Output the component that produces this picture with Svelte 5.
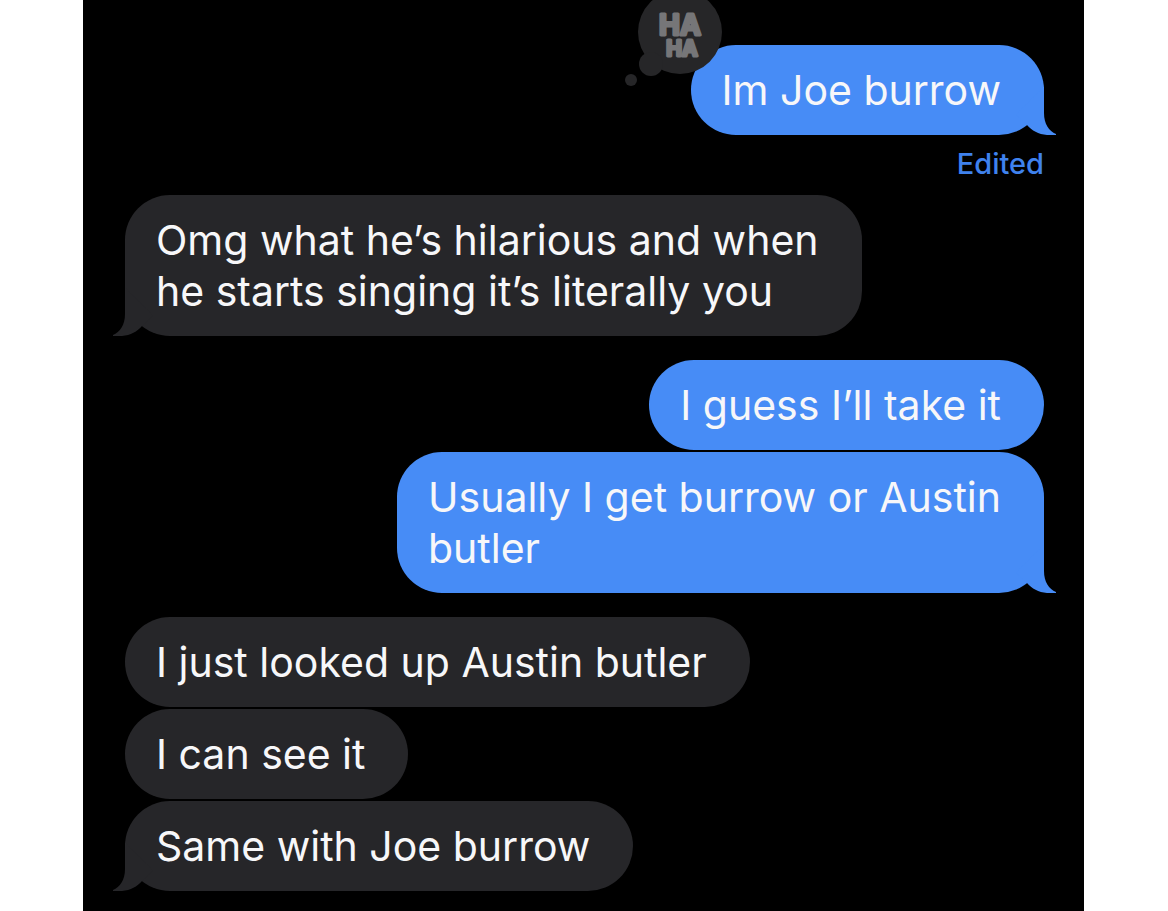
<script lang="ts">
  interface Message {
    text: string;
    sent: boolean;
    tail?: boolean;
    edited?: boolean;
    reaction?: boolean;
  }

  // Consecutive messages from one sender share a group
  let groups = $state<Message[][]>([
    [{ text: 'Im Joe burrow', sent: true, tail: true, edited: true, reaction: true }],
    [{ text: 'Omg what he’s hilarious and when\nhe starts singing it’s literally you', sent: false, tail: true }],
    [
      { text: 'I guess I’ll take it', sent: true },
      { text: 'Usually I get burrow or Austin\nbutler', sent: true, tail: true },
    ],
    [
      { text: 'I just looked up Austin butler', sent: false },
      { text: 'I can see it', sent: false },
      { text: 'Same with Joe burrow', sent: false, tail: true },
    ],
  ]);
</script>

<main class="page">
  <div class="chat">
    {#each groups as group}
      <div class="group" class:sent={group[0].sent}>
        {#each group as message}
          <div class="bubble">
            <p>{message.text}</p>
            {#if message.tail}
              <svg class="tail" viewBox="0 0 60 60" aria-hidden="true">
                <path d="M47 12H48V38C48 49 53 56 60 59C61 60 60 60 58 60C46 61 37 57 31 50L20 40Z" />
              </svg>
            {/if}
            {#if message.reaction}
              <svg class="reaction" viewBox="0 0 100 100" role="img" aria-label="Ha ha">
                <circle cx="56" cy="42" r="42" />
                <circle cx="27" cy="74" r="12" />
                <circle cx="7" cy="90" r="6" />
                <text class="ha" x="56" y="45" font-size="28">HA</text>
                <text class="ha" x="58" y="66" font-size="21">HA</text>
              </svg>
            {/if}
          </div>
          {#if message.edited}
            <button class="edited">Edited</button>
          {/if}
        {/each}
      </div>
    {/each}
  </div>
</main>

<style>
  :global(body) {
    margin: 0;
    background: #ffffff;
  }

  .page {
    padding: 0 84px 0 83px;
    font-family: Inter, "Liberation Sans", sans-serif;
  }

  .chat {
    display: flex;
    flex-direction: column;
    gap: 24px;
    box-sizing: border-box;
    min-height: 100vh;
    padding: 45px 40px 20px 42px;
    overflow: hidden;
    background: #000000;
  }

  .group {
    display: flex;
    flex-direction: column;
    align-items: flex-start;
    gap: 2px;
    color: #262629;
  }

  .group.sent {
    align-items: flex-end;
    color: #478cf6;
  }

  .bubble {
    position: relative;
    padding: 20px 43px 19px 31px;
    border-radius: 45px;
    background: currentColor;
  }

  .bubble p {
    margin: 0;
    font-size: 41px;
    line-height: 51px;
    white-space: pre-line;
    color: #f7f7f9;
  }

  .tail {
    position: absolute;
    left: -12px;
    bottom: 0;
    width: 60px;
    height: 60px;
    fill: currentColor;
    transform: scaleX(-1);
  }

  .sent .tail {
    left: auto;
    right: -12px;
    transform: none;
  }

  .reaction {
    position: absolute;
    left: -67px;
    top: -55px;
    width: 100px;
    height: 100px;
    fill: #262628;
  }

  .ha {
    fill: #767678;
    stroke: #767678;
    stroke-width: 3;
    stroke-linejoin: round;
    font-weight: 700;
    text-anchor: middle;
  }

  .edited {
    margin: 15px 0 -5px;
    padding: 0;
    border: none;
    background: none;
    color: #3f82ee;
    font-family: inherit;
    font-size: 29px;
    font-weight: 500;
    line-height: 24px;
    cursor: pointer;
  }
</style>
